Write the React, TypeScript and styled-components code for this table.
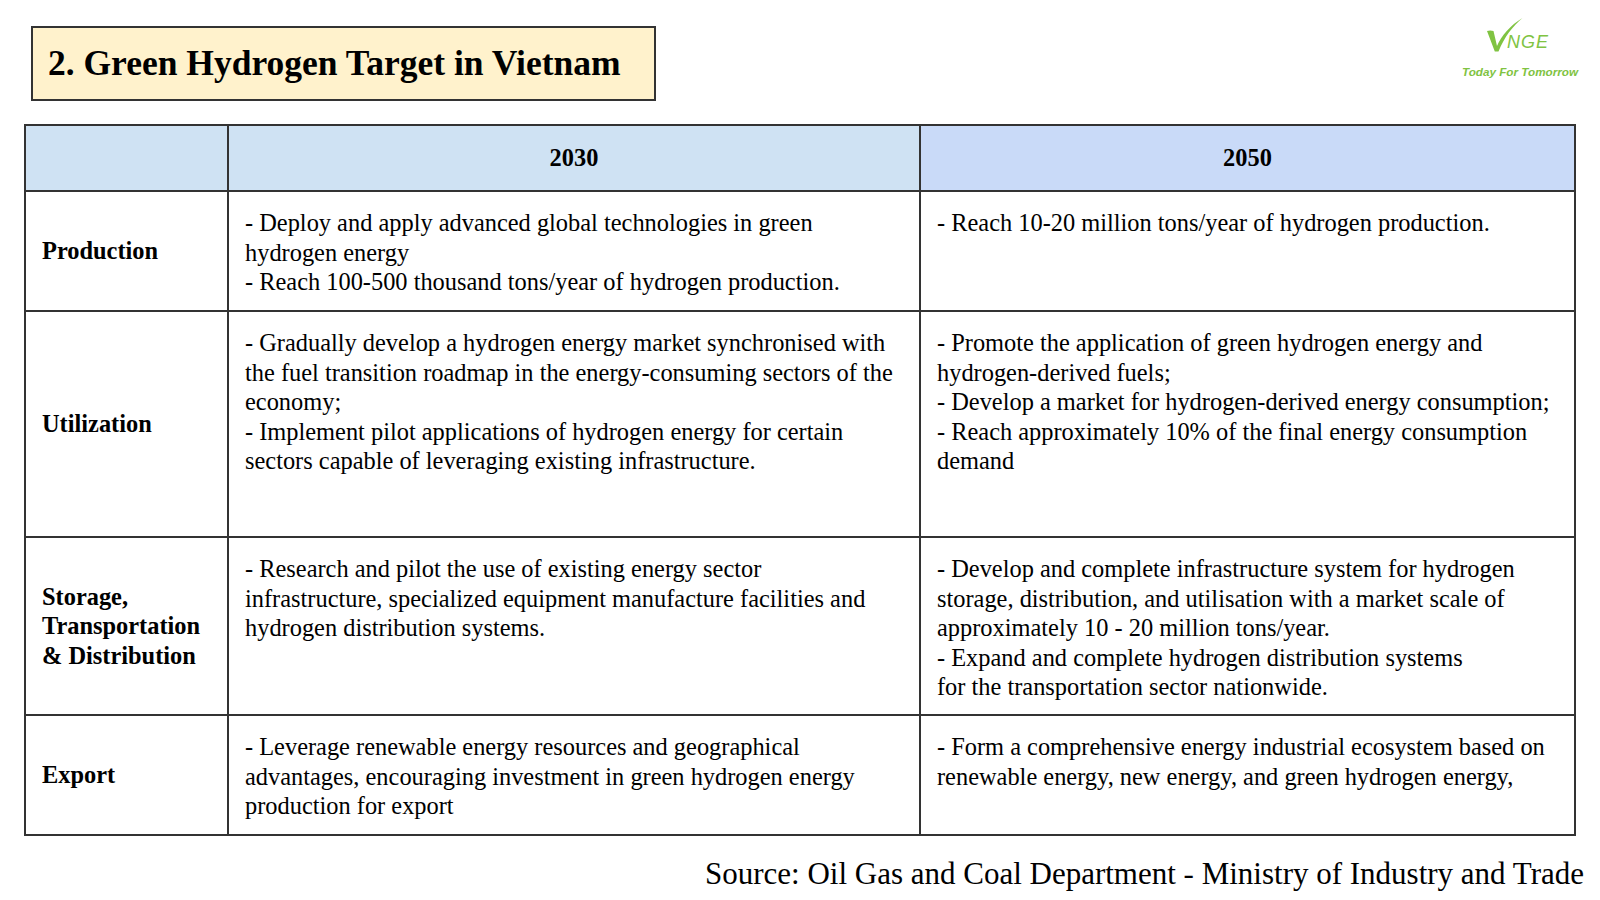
import * as React from 'react';
import styled, { createGlobalStyle } from 'styled-components';

const GlobalStyle = createGlobalStyle`
  html, body {
    margin: 0;
    padding: 0;
    background: #fff;
  }
  body {
    font-family: 'Liberation Serif', 'Times New Roman', serif;
    color: #000;
  }
`;

const LOGO_GREEN = '#80c342';

const Slide = styled.div`
  width: 1600px;
  height: 900px;
  position: relative;
  overflow: hidden;
  box-sizing: border-box;
`;

const TopBar = styled.header`
  display: flex;
  justify-content: space-between;
  align-items: flex-start;
  padding: 18px 22px 0 31px;
  height: 124px;
  box-sizing: border-box;
`;

const TitleBox = styled.div`
  margin-top: 8px;
  width: 625px;
  height: 75px;
  box-sizing: border-box;
  background: #fff2cc;
  border: 2px solid #333;
  display: flex;
  align-items: center;
  padding-left: 15px;
`;

const Title = styled.h1`
  margin: 0;
  font-size: 35.5px;
  font-weight: bold;
  line-height: 1;
  white-space: nowrap;
`;

const Logo = styled.div`
  display: flex;
  flex-direction: column;
  align-items: center;
  width: 116px;
  color: ${LOGO_GREEN};
  font-family: 'Liberation Sans', Arial, sans-serif;
  font-style: italic;
`;

const LogoMark = styled.div`
  align-self: flex-start;
  display: flex;
  align-items: flex-end;
  height: 34px;
  margin: 0 0 0 25px;
`;

const LogoLetters = styled.span`
  font-size: 18px;
  letter-spacing: 1px;
  line-height: 1;
  margin-left: -16px;
  margin-bottom: 1px;
`;

const Tagline = styled.div`
  margin-top: 14px;
  font-size: 11.7px;
  font-weight: bold;
  white-space: nowrap;
  line-height: 1;
`;

const Table = styled.table`
  margin-left: 24px;
  width: 1552px;
  border-collapse: collapse;
  table-layout: fixed;
  font-size: 24.4px;
  line-height: 29.6px;
`;

const HeadCell = styled.th<{ $bg: string }>`
  background: ${({ $bg }) => $bg};
  border: 2px solid #333;
  height: 64px;
  padding: 0;
  font-weight: bold;
  text-align: center;
  vertical-align: middle;
`;

const LabelCell = styled.td`
  border: 2px solid #333;
  padding: 0 0 0 16px;
  font-weight: bold;
  vertical-align: middle;
`;

const TextCell = styled.td`
  border: 2px solid #333;
  padding: 16px 4px 0 16px;
  vertical-align: top;
`;

const Row = styled.tr<{ $h: number }>`
  height: ${({ $h }) => $h}px;
`;

const Line = styled.div`
  white-space: nowrap;
`;

const Source = styled.p`
  margin: 22px 16px 0 0;
  text-align: right;
  font-size: 31px;
  line-height: 1;
  white-space: nowrap;
`;

const VMark = () => (
  <svg width="36" height="34" viewBox="0 0 36 34">
    <path
      d="M0 13 C2 12.3 4.5 12.3 6.5 13 L10 28 C14.5 17.5 23 7.5 35.5 0 C25.5 8.5 17.5 18.5 11.5 33.5 L7.8 33.5 Z"
      fill={LOGO_GREEN}
    />
  </svg>
);

interface IRow {
  label: string[];
  y2030: string[];
  y2050: string[];
  height: number;
}

const ROWS: IRow[] = [
  {
    label: ['Production'],
    y2030: [
      '- Deploy and apply advanced global technologies in green',
      'hydrogen energy',
      '- Reach 100-500 thousand tons/year of hydrogen production.'
    ],
    y2050: ['- Reach 10-20 million tons/year of hydrogen production.'],
    height: 120
  },
  {
    label: ['Utilization'],
    y2030: [
      '- Gradually develop a hydrogen energy market synchronised with',
      'the fuel transition roadmap in the energy-consuming sectors of the',
      'economy;',
      '- Implement pilot applications of hydrogen energy for certain',
      'sectors capable of leveraging existing infrastructure.'
    ],
    y2050: [
      '- Promote the application of green hydrogen energy and',
      'hydrogen-derived fuels;',
      '- Develop a market for hydrogen-derived energy consumption;',
      '- Reach approximately 10% of the final energy consumption',
      'demand'
    ],
    height: 226
  },
  {
    label: ['Storage,', 'Transportation', '& Distribution'],
    y2030: [
      '- Research and pilot the use of existing energy sector',
      'infrastructure, specialized equipment manufacture facilities and',
      'hydrogen distribution systems.'
    ],
    y2050: [
      '- Develop and complete infrastructure system for hydrogen',
      'storage, distribution, and utilisation with a market scale of',
      'approximately 10 - 20 million tons/year.',
      '- Expand and complete hydrogen distribution systems',
      'for the transportation sector nationwide.'
    ],
    height: 178
  },
  {
    label: ['Export'],
    y2030: [
      '- Leverage renewable energy resources and geographical',
      'advantages, encouraging investment in green hydrogen energy',
      'production for export'
    ],
    y2050: [
      '- Form a comprehensive energy industrial ecosystem based on',
      'renewable energy, new energy, and green hydrogen energy,'
    ],
    height: 120
  }
];

const Lines = ({ lines }: { lines: string[] }) => (
  <>
    {lines.map((l, i) => (
      <Line key={i}>{l}</Line>
    ))}
  </>
);

const App: React.FC = () => {
  return (
    <Slide>
      <GlobalStyle />
      <TopBar>
        <TitleBox>
          <Title>2. Green Hydrogen Target in Vietnam</Title>
        </TitleBox>
        <Logo>
          <LogoMark>
            <VMark />
            <LogoLetters>NGE</LogoLetters>
          </LogoMark>
          <Tagline>Today For Tomorrow</Tagline>
        </Logo>
      </TopBar>
      <Table>
        <colgroup>
          <col style={{ width: 203 }} />
          <col style={{ width: 692 }} />
          <col />
        </colgroup>
        <thead>
          <tr>
            <HeadCell $bg="#cfe2f3" />
            <HeadCell $bg="#cfe2f3">2030</HeadCell>
            <HeadCell $bg="#c9daf8">2050</HeadCell>
          </tr>
        </thead>
        <tbody>
          {ROWS.map(row => (
            <Row key={row.label.join(' ')} $h={row.height}>
              <LabelCell>
                <Lines lines={row.label} />
              </LabelCell>
              <TextCell>
                <Lines lines={row.y2030} />
              </TextCell>
              <TextCell>
                <Lines lines={row.y2050} />
              </TextCell>
            </Row>
          ))}
        </tbody>
      </Table>
      <Source>Source: Oil Gas and Coal Department - Ministry of Industry and Trade</Source>
    </Slide>
  );
};

export default App;
